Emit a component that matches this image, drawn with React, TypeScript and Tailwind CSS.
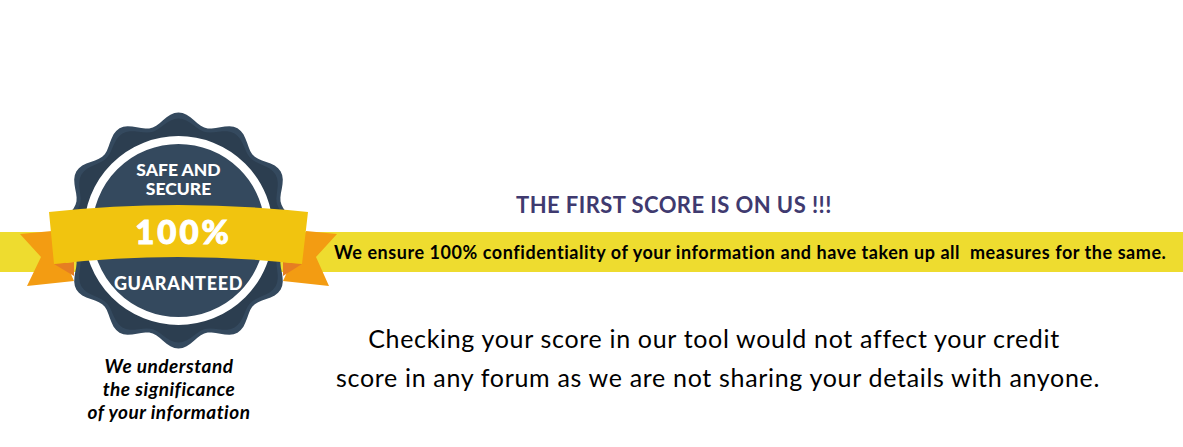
const wavePath = (cx: number, cy: number, base: number, amp: number) => {
  const pts: string[] = [];
  for (let i = 0; i < 360; i += 2) {
    const a = (i * Math.PI) / 180;
    const r = base + amp * Math.cos(12 * a);
    pts.push(`${(cx + r * Math.sin(a)).toFixed(1)} ${(cy - r * Math.cos(a)).toFixed(1)}`);
  }
  return `M${pts.join("L")}Z`;
};

function Badge() {
  return (
    <div className="absolute left-0 top-0 w-[340px] flex flex-col items-center font-['Lato',sans-serif]">
      <div className="relative w-[340px] h-[354px]">
        <svg width="340" height="354" viewBox="0 0 340 354" className="block">
          <path d="M20 234L52 231L74 281L27 286L41 257Z" fill="#f39c12" />
          <path d="M337 234L306 231L283 281L329 286L316 257Z" fill="#f39c12" />
          <path d="M54 264L74 262L74 276Z" fill="#e67e22" />
          <path d="M302 264L283 262L283 276Z" fill="#e67e22" />
          <path d={wavePath(178.5, 230.5, 112, 6)} fill="#34495e" />
          <path d={wavePath(178.5, 230.5, 107, 5)} fill="#2c3e50" />
          <circle cx="178.5" cy="230.5" r="90.5" fill="#34495e" stroke="#fff" strokeWidth="8" />
          <path d="M49 212Q178 198 308 212L302 264Q178 250 54 264Z" fill="#f1c40f" />
        </svg>
        <div className="absolute inset-0 pt-[160px] pl-[17px] flex flex-col items-center text-white font-black">
          <p className="text-[17.5px] leading-[19px]">SAFE AND</p>
          <p className="text-[17.5px] leading-[19px]">SECURE</p>
          <p className="mt-[11px] pl-[10px] text-[33px] leading-[44px] tracking-[3px] [-webkit-text-stroke:1px_white]">100%</p>
          <p className="mt-[19px] text-[18px] leading-[22px] tracking-[0.7px]">GUARANTEED</p>
        </div>
      </div>
      <div className="w-[300px] mr-[2px] text-center text-black italic font-bold text-[19px] leading-[23px] tracking-[0.5px]">
        <p>We understand</p>
        <p>the significance</p>
        <p>of your information</p>
      </div>
    </div>
  );
}

export default function App() {
  return (
    <div className="relative h-[447px] bg-white overflow-hidden font-['Lato',sans-serif]">
      <h2 className="pt-[192px] pl-[516px] text-[22px] leading-[25px] font-bold tracking-[0.43px] text-[#3f3a6f]">
        THE FIRST SCORE IS ON US !!!
      </h2>
      <div className="mt-[15px] h-10 bg-[#eedc2f] pl-[334px] flex items-center">
        <p className="text-[18px] font-bold tracking-[0.55px] text-black whitespace-pre">
          We ensure 100% confidentiality of your information and have taken up all  measures for the same.
        </p>
      </div>
      <div className="mt-[47px] ml-[336px] w-[764px] flex flex-col items-center text-[25px] leading-[39px] tracking-[0.68px] text-black whitespace-nowrap">
        <p className="pr-[8px]">Checking your score in our tool would not affect your credit</p>
        <p>score in any forum as we are not sharing your details with anyone.</p>
      </div>
      <Badge />
    </div>
  );
}
